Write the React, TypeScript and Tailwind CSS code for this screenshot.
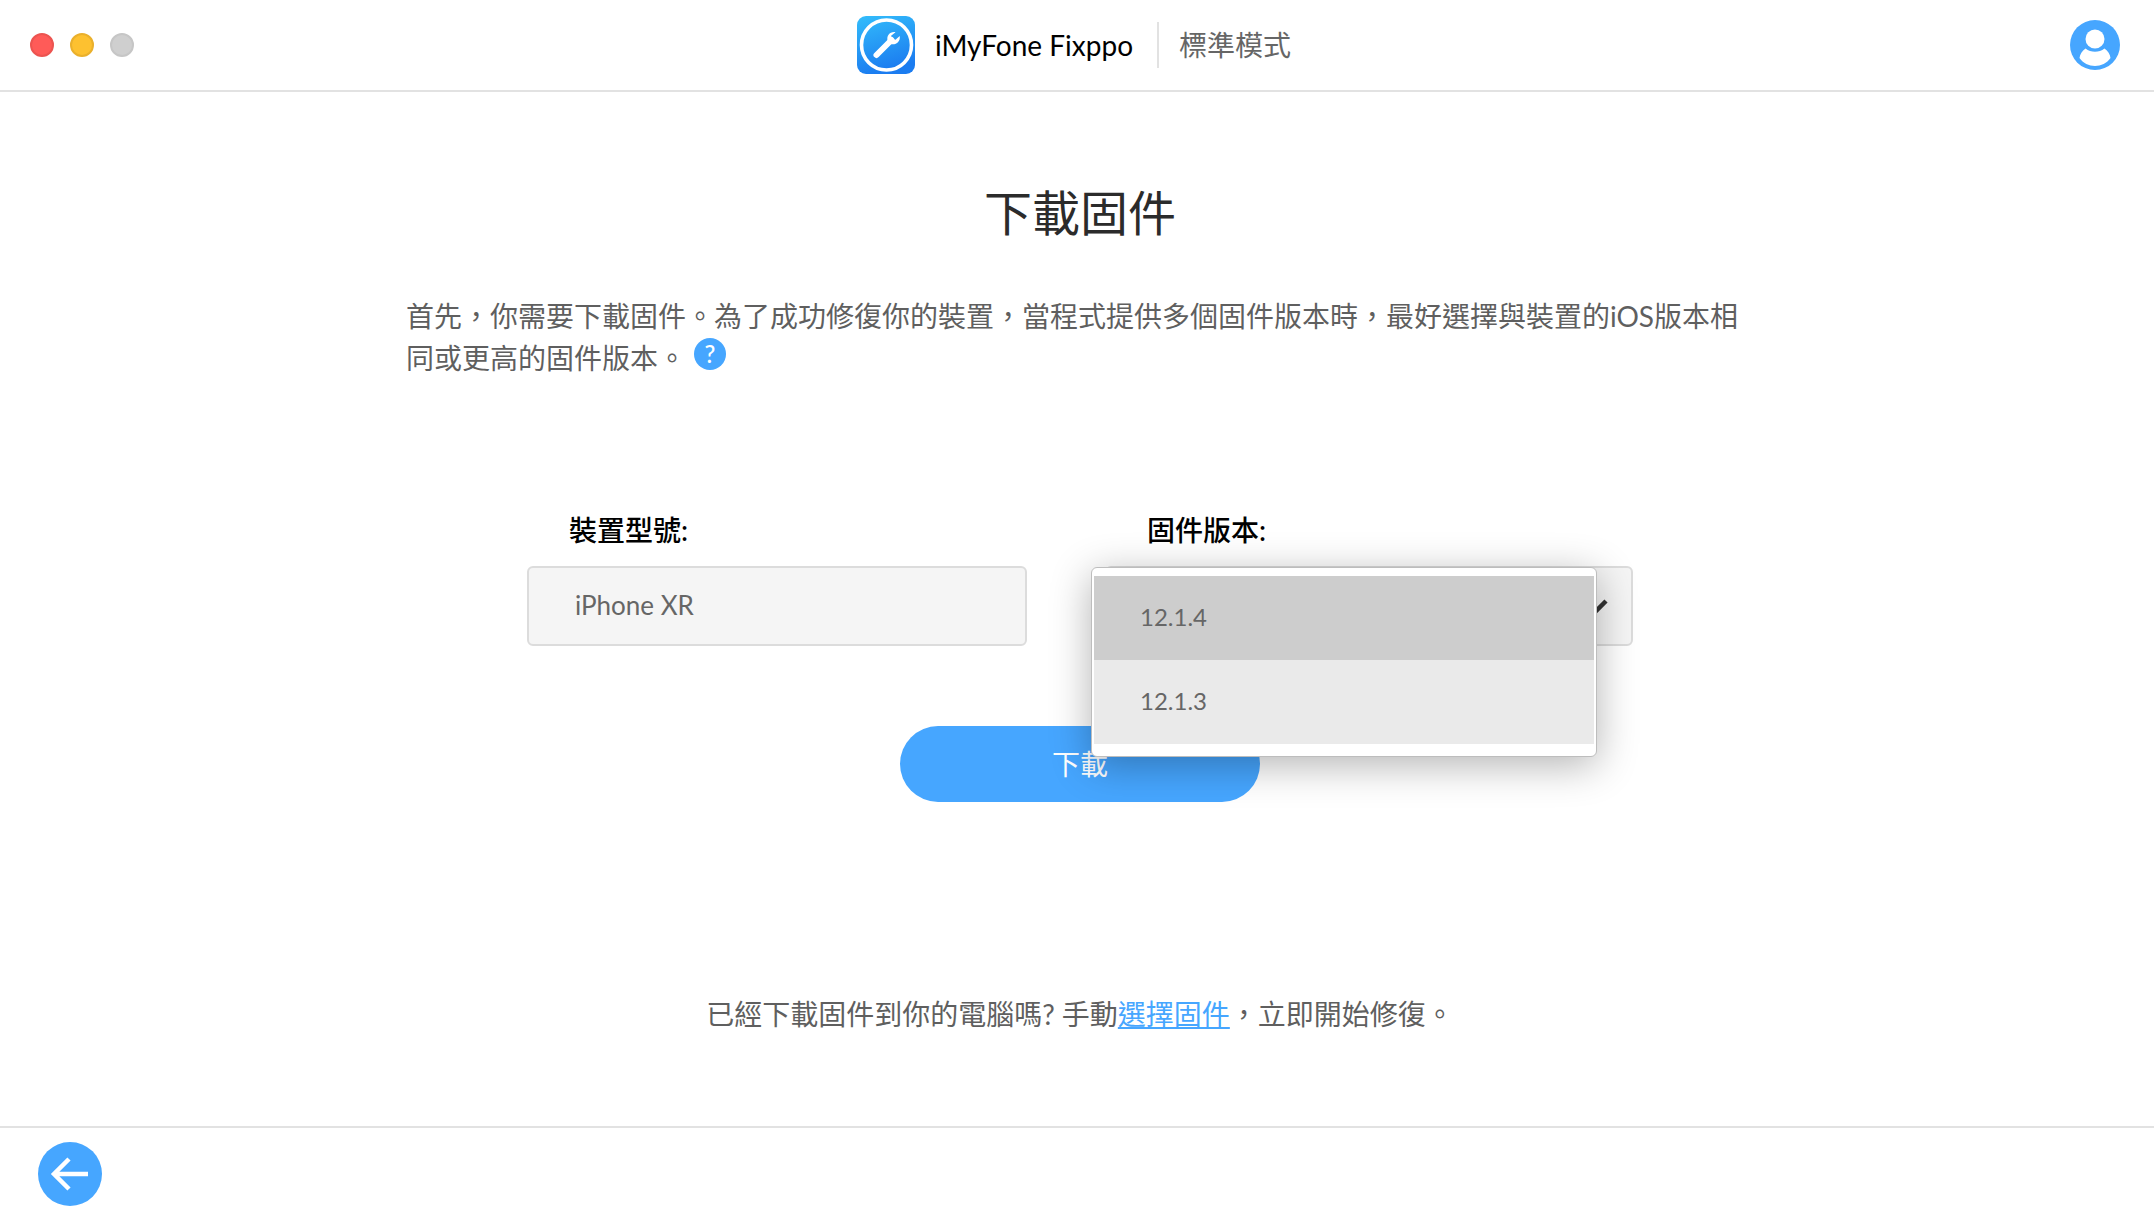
import React, { useState } from 'react';

const versions = ['12.1.4', '12.1.3'];

function AppLogo() {
  return (
    <svg viewBox="0 0 58 58" className="size-[58px]" aria-hidden="true">
      <defs>
        <linearGradient id="logo-bg" x1="0" y1="0" x2="0.3" y2="1">
          <stop offset="0" stopColor="#33bdfb" />
          <stop offset="1" stopColor="#1b7cf0" />
        </linearGradient>
      </defs>
      <rect width="58" height="58" rx="9" fill="url(#logo-bg)" />
      <circle cx="29.5" cy="29" r="25" fill="none" stroke="#fff" strokeWidth="3.6" />
      <path d="M19.5 39L34.5 24" stroke="#fff" strokeWidth="6" strokeLinecap="round" />
      <path
        d="M38.5 16.2c-5.5-.9-9.4 3.8-7.8 8.8l2.8 2.9c5 1.6 10.2-2 9.2-8l-4.2 3.9-3.6-.8-.8-3.3z"
        fill="#fff"
      />
    </svg>
  );
}

function UserIcon() {
  return (
    <svg viewBox="0 0 50 50" className="size-[50px]" aria-hidden="true">
      <circle cx="25" cy="25" r="25" fill="#46a6ff" />
      <circle cx="25" cy="19" r="9.5" fill="#fff" />
      <path d="M15.5 28.5c5.5 4.3 13.5 4.3 19 0 3.5 2.3 5.5 6 6 9.5-7 10.5-24 10.5-31 0 .5-3.5 2.5-7.2 6-9.5z" fill="#fff" />
    </svg>
  );
}

function Header() {
  return (
    <header className="grid h-[92px] grid-cols-[1fr_auto_1fr] items-center border-b-2 border-[#e2e2e2] pr-[34px] pl-[30px]">
      <div className="flex gap-4">
        <button type="button" aria-label="Close" className="size-6 rounded-full border-2 border-[#ec5450] bg-[#ff5b58]" />
        <button type="button" aria-label="Minimize" className="size-6 rounded-full border-2 border-[#eab02c] bg-[#fdc130]" />
        <button type="button" aria-label="Zoom" disabled className="size-6 rounded-full border-2 border-[#c6c6c6] bg-[#cfcfcf]" />
      </div>
      <div className="flex items-center pr-0.5">
        <AppLogo />
        <span className="ml-5 text-[28px] leading-[38px] text-black">iMyFone Fixppo</span>
        <span className="ml-6 h-[46px] w-0.5 bg-[#e2e2e2]" />
        <span className="ml-5 text-[28px] leading-[38px] text-[#666]">標準模式</span>
      </div>
      <button type="button" aria-label="帳戶" className="justify-self-end">
        <UserIcon />
      </button>
    </header>
  );
}

function VersionSelect() {
  const [version, setVersion] = useState('12.1.4');
  const [open, setOpen] = useState(true);

  const pick = (v: string) => {
    setVersion(v);
    setOpen(false);
  };

  return (
    <div className="relative">
      <select
        id="version"
        value={version}
        onChange={(e) => setVersion(e.target.value)}
        onMouseDown={(e) => {
          e.preventDefault();
          setOpen(!open);
        }}
        className="h-20 w-full appearance-none rounded-md border-2 border-[#dcdcdc] bg-[#f5f5f5] px-[46px] text-2xl text-[#666] outline-none"
      >
        {versions.map((v) => (
          <option key={v} value={v}>
            {v}
          </option>
        ))}
      </select>
      <svg viewBox="0 0 32 20" className="pointer-events-none absolute top-8 right-6 h-5 w-8" aria-hidden="true">
        <path d="M3 3l13 13L29 3" fill="none" stroke="#333" strokeWidth="4.5" />
      </svg>

      {open && (
        <ul className="absolute top-px right-9 -left-3.5 z-10 rounded-md border border-[#bdbdbd] bg-white px-0.5 pt-2 pb-3 shadow-[0_8px_40px_rgba(0,0,0,0.3)]">
          {versions.map((v) => (
            <li key={v}>
              <button
                type="button"
                onClick={() => pick(v)}
                className={`h-[84px] w-full px-[46px] pb-0.5 text-left text-2xl text-[#666] ${
                  v === version ? 'bg-[#cdcdcd]' : 'bg-[#eaeaea]'
                }`}
              >
                {v}
              </button>
            </li>
          ))}
        </ul>
      )}
    </div>
  );
}

export default function App() {
  return (
    <div
      lang="zh-Hant"
      className="flex min-h-screen flex-col bg-white font-['Lato','Noto_Sans_CJK_TC',sans-serif] text-[#5f5f5f]"
    >
      <Header />

      <main className="flex flex-1 flex-col items-center pl-1.5">
        <h1 className="mt-[89px] text-5xl leading-[64px] text-[#2b2b2b]">下載固件</h1>
        <p className="mt-[50px] w-full max-w-[1348px] text-[28px] leading-[42px]">
          首先，你需要下載固件。為了成功修復你的裝置，當程式提供多個固件版本時，最好選擇與裝置的iOS版本相同或更高的固件版本。
          <button
            type="button"
            aria-label="說明"
            className="ml-2 inline-flex size-8 items-center justify-center rounded-full bg-[#46a6ff] align-[6px] text-2xl leading-6 font-medium text-white"
          >
            ?
          </button>
        </p>

        <form className="mt-[131px] flex flex-col items-center" onSubmit={(e) => e.preventDefault()}>
          <div className="grid grid-cols-[500px_528px] gap-[78px]">
            <div>
              <label htmlFor="model" className="mb-4 block pl-[42px] text-[28px] leading-10 font-medium text-black">
                裝置型號:
              </label>
              <input
                id="model"
                readOnly
                value="iPhone XR"
                className="h-20 w-full rounded-md border-2 border-[#dcdcdc] bg-[#f5f5f5] px-[46px] pb-0.5 text-[26px] text-[#666] outline-none"
              />
            </div>
            <div>
              <label htmlFor="version" className="mb-4 block pl-[42px] text-[28px] leading-10 font-medium text-black">
                固件版本:
              </label>
              <VersionSelect />
            </div>
          </div>
          <button type="submit" className="mt-20 h-[76px] w-[360px] rounded-full bg-[#46a6ff] text-[28px] text-white">
            下載
          </button>
        </form>

        <p className="mt-[191px] mb-10 text-[28px] leading-[42px]">
          已經下載固件到你的電腦嗎? 手動
          <a href="#" className="text-[#46a6ff] underline decoration-2 underline-offset-2">
            選擇固件
          </a>
          ，立即開始修復。
        </p>
      </main>

      <footer className="flex h-[94px] items-center border-t-2 border-[#e2e2e2] px-[38px]">
        <button type="button" aria-label="返回">
          <svg viewBox="0 0 64 64" className="size-16" aria-hidden="true">
            <circle cx="32" cy="32" r="32" fill="#46a6ff" />
            <path d="M50 32H16M31 17L16 32l15 15" fill="none" stroke="#fff" strokeWidth="4.5" />
          </svg>
        </button>
      </footer>
    </div>
  );
}
